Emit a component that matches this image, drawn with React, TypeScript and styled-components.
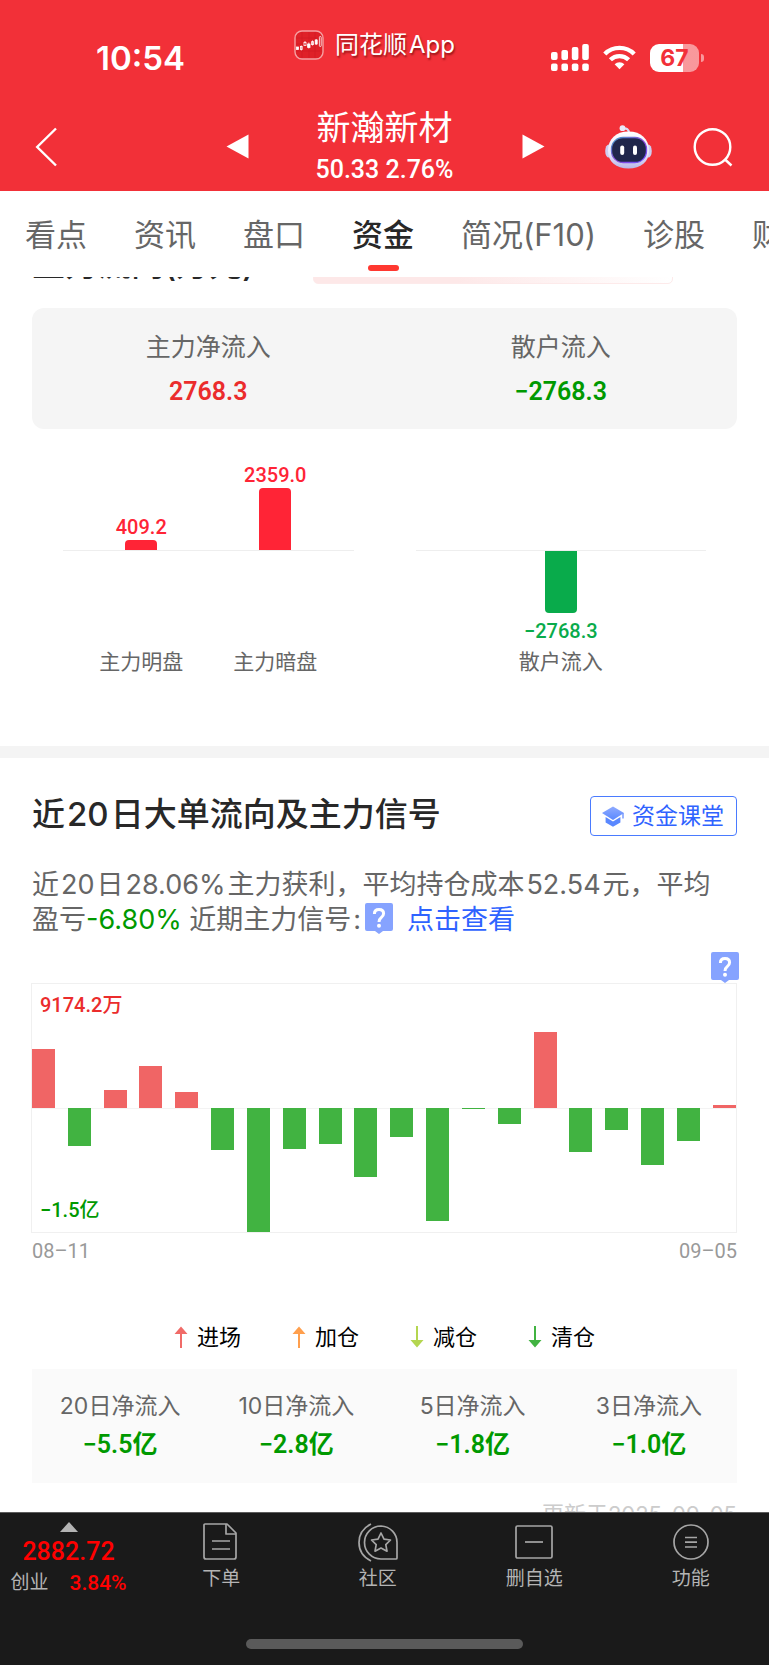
import React, { useLayoutEffect, useRef } from "react";
import styled, { createGlobalStyle } from "styled-components";

const GlobalStyle = createGlobalStyle`
  * { box-sizing: border-box; }
  html, body { margin: 0; padding: 0; background: #fff; }
  body {
    font-family: Inter, "Noto Sans CJK SC", sans-serif;
    color: #323232;
  }
  button { font: inherit; color: inherit; background: none; border: 0; padding: 0; margin: 0; cursor: pointer; }
  h1, h2, p, dl, dd, dt, ul { margin: 0; padding: 0; }
  ul { list-style: none; }
  a { text-decoration: none; }
  svg { display: block; flex: none; }
`;

const RED = "#eb2c2c";
const GREEN = "#009900";
const NUMERIC = `Roboto, "Noto Sans CJK SC", sans-serif`;

const Shell = styled.div`
  display: flex;
  flex-direction: column;
  height: 100vh;
  background: #fff;
`;

/* Latin runs inside Chinese text get a thin space on both sides. */
const Latin = styled.span`
  margin: 0 2px;
`;

/* ---------- header ---------- */

const Header = styled.header`
  flex: none;
  background: #f23038;
  color: #fff;
`;

const StatusBar = styled.div`
  display: grid;
  grid-template-columns: 1fr auto 1fr;
  align-items: center;
  height: 96px;
  padding-top: 19px;
`;

const Clock = styled.time`
  padding-left: 96px;
  font-size: 33px;
  line-height: 40px;
  font-weight: 600;
`;

const AppBadge = styled.div`
  display: flex;
  align-items: center;
  align-self: start;
  gap: 11px;
  margin: 11px 18px 0 0;
  font-size: 24px;
  line-height: 30px;
  text-shadow: 1px 2px 2px rgba(90, 0, 0, 0.6);
`;

const StatusIcons = styled.div`
  display: flex;
  align-items: center;
  justify-content: flex-end;
  gap: 14px;
  padding-right: 65px;
`;

const Battery = styled.div`
  display: flex;
  align-items: center;
  gap: 2px;

  &::after {
    content: "";
    width: 3px;
    height: 8px;
    border-radius: 0 3px 3px 0;
    background: rgba(255, 255, 255, 0.5);
  }
`;

const BatteryLevel = styled.span`
  width: 49px;
  height: 28px;
  border-radius: 9px;
  background: linear-gradient(90deg, #fff 67%, rgba(255, 255, 255, 0.5) 67%);
  color: #f23038;
  font-size: 23px;
  line-height: 28px;
  font-weight: 700;
  text-align: center;
`;

const NavBar = styled.div`
  display: grid;
  grid-template-columns: 1fr auto 1fr;
  column-gap: 67px;
  align-items: center;
  height: 95px;
  padding-top: 6px;
`;

const NavSide = styled.div<{ $end?: boolean }>`
  display: flex;
  align-items: center;
  justify-content: space-between;
  padding: ${(p) => (p.$end ? "0 36px 0 2px" : "0 0 0 35px")};
`;

const NavActions = styled.div`
  display: flex;
  align-items: center;
  gap: 41px;
`;

const StockTitle = styled.div`
  display: flex;
  flex-direction: column;
  align-items: center;
  gap: 9px;
  padding-bottom: 3px;
`;

const StockName = styled.h1`
  font-size: 34px;
  line-height: 40px;
  font-weight: 400;
`;

const StockPrice = styled.p`
  font-family: ${NUMERIC};
  font-size: 25px;
  line-height: 26px;
  font-weight: 500;
`;

/* ---------- tabs ---------- */

const Tabs = styled.nav`
  flex: none;
  display: flex;
  gap: 47px;
  height: 86px;
  padding: 24px 0 0 25px;
  overflow: hidden;
  background: #fff;
`;

const Tab = styled.button<{ $active?: boolean }>`
  flex: none;
  display: flex;
  flex-direction: column;
  align-items: center;
  justify-content: flex-start;
  font-size: 31px;
  line-height: 40px;
  white-space: nowrap;
  color: ${(p) => (p.$active ? "#282828" : "#666")};
  font-weight: ${(p) => (p.$active ? 500 : 400)};

  &::after {
    content: "";
    width: 31px;
    height: 6px;
    margin-top: 10px;
    border-radius: 3px;
    background: ${(p) => (p.$active ? "#ff3830" : "transparent")};
  }
`;

/* ---------- scrolling body ---------- */

const Body = styled.main`
  flex: 1;
  min-height: 0;
  overflow-y: auto;
  scrollbar-width: none;
`;

const Section = styled.section`
  padding: 24px 32px 70px;
`;

const Divider = styled.div`
  height: 12px;
  background: #f4f4f4;
`;

const FlowHead = styled.div`
  display: flex;
  align-items: flex-end;
  gap: 59px;
  height: 45px;
  padding-bottom: 3px;
`;

const Heading = styled.h2`
  font-size: 33px;
  line-height: 36px;
  font-weight: 500;
  color: #282828;
  white-space: nowrap;
`;

const Promo = styled.div`
  align-self: flex-start;
  width: 360px;
  height: 44px;
  border: 1px solid #fdeaea;
  border-radius: 5px;
  background: linear-gradient(90deg, #fde8e8 40%, #fff);
`;

const FlowCard = styled.dl`
  display: grid;
  grid-template-columns: 1fr 1fr;
  margin-top: 23px;
  padding: 24px 0 22px;
  border-radius: 12px;
  background: #f5f5f5;
`;

const Stat = styled.div<{ $gap: number }>`
  display: flex;
  flex-direction: column;
  align-items: center;
  gap: ${(p) => p.$gap}px;
`;

const StatLabel = styled.dt<{ $size: number }>`
  font-size: ${(p) => p.$size}px;
  line-height: 30px;
  color: #666;
`;

const StatValue = styled.dd<{ $up?: boolean }>`
  font-family: ${NUMERIC};
  font-size: 25px;
  line-height: 30px;
  font-weight: 600;
  color: ${(p) => (p.$up ? RED : GREEN)};
`;

const SplitChart = styled.div`
  display: grid;
  grid-template-columns: 1fr 1fr;
`;

const SplitPanel = styled.div`
  position: relative;
  display: flex;
  justify-content: center;
  margin: 0 31px;

  &::before {
    content: "";
    position: absolute;
    top: 121px;
    left: 0;
    right: 0;
    height: 1px;
    background: #eee;
  }
`;

const SplitColumn = styled.div`
  display: flex;
  flex-direction: column;
  width: 134px;
  font-size: 21px;
  line-height: 28px;
  text-align: center;
  color: #666;
`;

const Half = styled.div<{ $down?: boolean }>`
  display: flex;
  flex-direction: column;
  align-items: center;
  justify-content: ${(p) => (p.$down ? "flex-start" : "flex-end")};
  gap: ${(p) => (p.$down ? 6 : 1)}px;
  height: ${(p) => (p.$down ? 97 : 121)}px;
  margin-bottom: ${(p) => (p.$down ? 0 : 1)}px;
  font-family: ${NUMERIC};
  font-size: 20px;
  line-height: 24px;
  font-weight: 500;
  color: ${(p) => (p.$down ? "#09ab4b" : "#ff2436")};
`;

const SplitBar = styled.div<{ $down?: boolean }>`
  width: 32px;
  border-radius: ${(p) => (p.$down ? "0 0 4px 4px" : "4px 4px 0 0")};
  background: currentColor;
`;

const SignalHead = styled.div`
  display: flex;
  align-items: flex-start;
  justify-content: space-between;
  padding-top: 14px;
`;

const LessonLink = styled.a`
  display: flex;
  align-items: center;
  gap: 8px;
  height: 40px;
  padding: 0 12px 0 11px;
  border: 1px solid #4a7bff;
  border-radius: 4px;
  font-size: 23px;
  line-height: 30px;
  color: #2f63ff;
`;

const Summary = styled.p`
  margin-top: 31px;
  padding-right: 20px;
  font-size: 27px;
  line-height: 35px;
  color: #666;
`;

const Loss = styled.span`
  color: ${GREEN};
`;

const ViewLink = styled.a`
  margin-left: 14px;
  color: #2f63ff;
`;

const HelpButton = styled.button`
  margin: 1px 0 0 2px;
  vertical-align: top;
`;

const PinnedHelp = styled.button`
  position: absolute;
  right: -3px;
  top: -32px;
`;

const DailyChart = styled.div`
  position: relative;
  margin: 46px 0 0 -1px;
  border: 1px solid #f0f0f0;
  background: linear-gradient(#f3f3f3, #f3f3f3) center / 100% 1px no-repeat;
`;

const ChartNote = styled.span<{ $up?: boolean }>`
  position: absolute;
  left: 8px;
  ${(p) => (p.$up ? "top: 7px;" : "bottom: 8px;")}
  font-family: ${NUMERIC};
  font-size: 20px;
  line-height: 28px;
  font-weight: 500;
  color: ${(p) => (p.$up ? RED : GREEN)};
`;

const Bars = styled.div`
  display: flex;
  justify-content: space-between;
  height: 248px;
`;

const Bar = styled.div<{ $up: boolean }>`
  align-self: ${(p) => (p.$up ? "flex-start" : "flex-end")};
  display: flex;
  align-items: ${(p) => (p.$up ? "flex-end" : "flex-start")};
  width: 23px;
  height: 50%;

  > i {
    width: 100%;
    background: ${(p) => (p.$up ? "#f06565" : "#41b341")};
  }
`;

const Dates = styled.div`
  display: flex;
  justify-content: space-between;
  margin-top: 6px;
  font-family: ${NUMERIC};
  font-size: 20px;
  line-height: 24px;
  color: #999;
`;

const Legend = styled.ul`
  display: flex;
  justify-content: center;
  gap: 51px;
  margin-top: 59px;
`;

const LegendItem = styled.li`
  display: flex;
  align-items: center;
  gap: 9px;
  font-size: 22px;
  line-height: 30px;
  color: #000;
`;

const NetFlows = styled.dl`
  display: grid;
  grid-template-columns: repeat(4, 1fr);
  margin-top: 17px;
  padding: 22px 0 23px;
  background: #fafafa;
`;

const Updated = styled.p`
  margin-top: 16px;
  font-size: 22px;
  line-height: 30px;
  text-align: right;
  color: #ccc;
`;

/* ---------- footer ---------- */

const Footer = styled.footer`
  flex: none;
  display: flex;
  flex-direction: column;
  justify-content: space-between;
  height: 153px;
  padding-bottom: 16px;
  border-top: 1px solid #5c5c5c;
  background: #1a1a1a;
  color: #b4b4b4;
`;

const Actions = styled.div`
  display: grid;
  grid-template-columns: 143px repeat(4, 1fr);
`;

const IndexQuote = styled.button`
  display: flex;
  flex-direction: column;
  align-items: center;
  padding: 9px 6px 0 0;
`;

const IndexValue = styled.strong`
  margin-top: 7px;
  font-family: ${NUMERIC};
  font-size: 25px;
  line-height: 26px;
  font-weight: 500;
  color: #f00;
`;

const IndexChange = styled.span`
  display: flex;
  align-items: center;
  gap: 21px;
  margin-top: 5px;
  font-size: 19px;
  line-height: 26px;

  > b {
    font-family: ${NUMERIC};
    font-size: 21px;
    font-weight: 500;
    color: #f00;
  }
`;

const Action = styled.button`
  display: flex;
  flex-direction: column;
  align-items: center;
  gap: 4px;
  padding-top: 9px;
  font-size: 19px;
  line-height: 26px;
`;

const HomeIndicator = styled.div`
  align-self: center;
  width: 36%;
  height: 10px;
  border-radius: 5px;
  background: #5a5a5a;
`;

/* ---------- icons ---------- */

const AppIcon = () => (
  <svg width="30" height="30" viewBox="0 0 30 30" aria-hidden="true">
    <rect x="1" y="1" width="28" height="28" rx="7" fill="#df2128" stroke="#f5a0a2" strokeWidth="1.4" />
    <path d="M2 8H28M2 14H28M2 21H28M8 2V28M15 2V28M21 2V28" stroke="#d01a22" strokeWidth="0.6" />
    <g stroke="#fff" strokeWidth="0.8">
      <rect x="2.5" y="17" width="2" height="2.5" fill="#fff" />
      <rect x="6.4" y="16.5" width="1.8" height="3" fill="none" />
      <rect x="10" y="12.5" width="2" height="3" fill="none" />
      <rect x="13.6" y="14" width="2.4" height="3.4" fill="#fff" />
      <rect x="17.6" y="11.6" width="1.8" height="3" fill="none" />
      <rect x="21.2" y="10" width="2" height="4" fill="#fff" />
      <rect x="25.4" y="6.5" width="1.8" height="10" rx="0.8" fill="none" />
      <path d="M7.3 15.5V20.5M11 11V12.5M14.8 12.5V18.5M18.5 10.5V15.5M22.2 9V15" />
    </g>
  </svg>
);

const SignalIcon = () => (
  <svg width="38" height="27" viewBox="0 0 38 27" fill="#fff" aria-hidden="true">
    <rect x="0" y="8" width="6.6" height="8" rx="2" />
    <rect x="10.4" y="6" width="6.6" height="10" rx="2" />
    <rect x="20.8" y="3" width="6.6" height="13" rx="2" />
    <rect x="31.2" y="0" width="6.6" height="16" rx="2" />
    <rect x="0" y="19.5" width="6.6" height="7.5" rx="2" />
    <rect x="10.4" y="19.5" width="6.6" height="7.5" rx="2" />
    <rect x="20.8" y="19.5" width="6.6" height="7.5" rx="2" />
    <rect x="31.2" y="19.5" width="6.6" height="7.5" rx="2" />
  </svg>
);

const WifiIcon = () => (
  <svg width="33" height="25" viewBox="0 0 33 25" fill="none" stroke="#fff" strokeWidth="4.4" aria-hidden="true">
    <path d="M1.8 9A20.8 20.8 0 0 1 31.2 9" />
    <path d="M7.4 14.8A13 13 0 0 1 25.6 14.8" />
    <path d="M11.6 19.2A7 7 0 0 1 21.4 19.2L16.5 24.2Z" fill="#fff" stroke="none" />
  </svg>
);

const BackIcon = () => (
  <svg width="23" height="40" viewBox="0 0 23 40" fill="none" stroke="#fff" strokeWidth="2.4" aria-hidden="true">
    <path d="M21 1.5L2.2 20L21 38.5" />
  </svg>
);

const TriangleIcon = ({ right }: { right?: boolean }) => (
  <svg width="23" height="25" viewBox="0 0 23 25" fill="#fff" aria-hidden="true">
    <path d={right ? "M0.5 0.5V24.5L22.5 12.5Z" : "M22.5 0.5V24.5L0.5 12.5Z"} />
  </svg>
);

const RobotIcon = () => (
  <svg width="47" height="44" viewBox="0 0 47 44" aria-hidden="true">
    <defs>
      <linearGradient id="shell" x1="0" y1="0" x2="0" y2="1">
        <stop offset="0" stopColor="#ffffff" />
        <stop offset="0.6" stopColor="#e8e6fa" />
        <stop offset="1" stopColor="#b9b6e6" />
      </linearGradient>
      <linearGradient id="rim" x1="0" y1="0" x2="1" y2="1">
        <stop offset="0" stopColor="#3f9fc4" />
        <stop offset="0.5" stopColor="#8b4bd8" />
        <stop offset="1" stopColor="#6a4dff" />
      </linearGradient>
    </defs>
    <path d="M17 3.5Q24 2.5 24 8" fill="none" stroke="#dcdcf6" strokeWidth="2.2" />
    <circle cx="17.5" cy="3.2" r="2.9" fill="#e9e9fa" />
    <ellipse cx="3.8" cy="26" rx="3.6" ry="6.6" fill="#cfcdf0" />
    <ellipse cx="43.2" cy="26" rx="3.6" ry="6.6" fill="#cfcdf0" />
    <path d="M23.5 6.5C36 6.5 44 14 44 25.5S36 43.5 23.5 43.5S3 37 3 25.5S11 6.5 23.5 6.5Z" fill="url(#shell)" />
    <rect x="6.5" y="12.5" width="35" height="25" rx="11.5" fill="#20264b" stroke="url(#rim)" strokeWidth="1.3" />
    <rect x="15.2" y="20.5" width="4" height="9.5" rx="2" fill="#fff" />
    <rect x="28" y="20.5" width="4" height="9.5" rx="2" fill="#fff" />
  </svg>
);

const SearchIcon = () => (
  <svg width="40" height="40" viewBox="0 0 40 40" fill="none" stroke="#fff" strokeWidth="2.4" aria-hidden="true">
    <circle cx="19.5" cy="20" r="17.8" />
    <path d="M31.5 32L38.5 38.5" />
  </svg>
);

const HelpIcon = () => (
  <svg width="28" height="31" viewBox="0 0 28 31" aria-hidden="true">
    <path d="M2 0H26Q28 0 28 2V26Q28 28 26 28H18L14 31L10 28H2Q0 28 0 26V2Q0 0 2 0Z" fill="#86a3ff" />
    <path d="M9.4 11Q9.4 6.6 14 6.6Q18.6 6.6 18.6 10.6Q18.6 12.8 16.2 14.6Q14 16.2 14 19" fill="none" stroke="#fff" strokeWidth="3" />
    <circle cx="14" cy="22.8" r="2" fill="#fff" />
  </svg>
);

const CapIcon = () => (
  <svg width="22" height="21" viewBox="0 0 22 21" aria-hidden="true">
    <defs>
      <linearGradient id="cap" x1="0" y1="0" x2="0" y2="1">
        <stop offset="0" stopColor="#8fabff" />
        <stop offset="1" stopColor="#5a88ff" />
      </linearGradient>
    </defs>
    <path d="M11 0.5L22 7L11 14L0 7Z" fill="url(#cap)" />
    <path d="M3.6 11L11 15.6L18.4 11V16.4L11 20.8L3.6 16.4Z" fill="#5a88ff" />
    <path d="M21 7V12.5" stroke="#6f94ff" strokeWidth="1.4" />
  </svg>
);

const ArrowIcon = ({ color, down }: { color: string; down?: boolean }) => (
  <svg width="14" height="22" viewBox="0 0 14 22" fill={color} aria-hidden="true">
    {down ? <path d="M6 0H8V14H13.5L7 21.5L0.5 14H6Z" /> : <path d="M7 0.5L13.5 8H8V22H6V8H0.5Z" />}
  </svg>
);

const CaretIcon = () => (
  <svg width="18" height="10" viewBox="0 0 18 10" fill="#b4b4b4" aria-hidden="true">
    <path d="M9 0L18 10H0Z" />
  </svg>
);

const LineIcon = ({ children }: { children: React.ReactNode }) => (
  <svg width="40" height="40" viewBox="0 0 40 40" fill="none" stroke="#a6a6a6" strokeWidth="1.7" strokeLinejoin="round" aria-hidden="true">
    {children}
  </svg>
);

/* ---------- data ---------- */

const tabs = ["看点", "资讯", "盘口", "资金", "简况(F10)", "诊股", "财务"];
const daily = [59, -38, 18, 42, 16, -42, -124, -41, -36, -69, -29, -113, -1, -16, 76, -44, -22, -57, -33, 3];
const netFlows = [
  ["20日净流入", "−5.5亿"],
  ["10日净流入", "−2.8亿"],
  ["5日净流入", "−1.8亿"],
  ["3日净流入", "−1.0亿"],
];
const legend = [
  { name: "进场", color: "#f06b68" },
  { name: "加仓", color: "#ff9f4d" },
  { name: "减仓", color: "#b4d650", down: true },
  { name: "清仓", color: "#41b341", down: true },
];
const actions = [
  {
    name: "下单",
    icon: (
      <>
        <path d="M4 2H26L35 11V35Q35 37 33 37H5Q3 37 3 35V3Q3 2 4 2Z" />
        <path d="M25 2V12H35M11 19H29M11 27H29" />
      </>
    ),
  },
  {
    name: "社区",
    icon: (
      <>
        <path d="M23 4A16.5 16.5 0 1 0 23 37H38Q39 37 39 36V21A16.5 16.5 0 0 0 23 4Z" />
        <path d="M13 2Q1 8 1 20.5T13 39" />
        <path d="M23 11L26 17.2L32.5 18L27.8 22.6L29 29.2L23 26L17 29.2L18.2 22.6L13.5 18L20 17.2Z" />
      </>
    ),
  },
  {
    name: "删自选",
    icon: (
      <>
        <rect x="2" y="4" width="36" height="32" rx="1.5" />
        <path d="M11 20H29" />
      </>
    ),
  },
  {
    name: "功能",
    icon: (
      <>
        <circle cx="20" cy="20" r="17" />
        <path d="M14 15.5H26M14 20.2H26M14 25H26" />
      </>
    ),
  },
];

export default function App() {
  const body = useRef<HTMLElement>(null);

  useLayoutEffect(() => {
    if (body.current) body.current.scrollTop = 61;
  }, []);

  return (
    <Shell>
      <GlobalStyle />
      <Header>
        <StatusBar>
          <Clock>10:54</Clock>
          <AppBadge>
            <AppIcon />
            <span>同花顺<Latin>App</Latin></span>
          </AppBadge>
          <StatusIcons>
            <SignalIcon />
            <WifiIcon />
            <Battery>
              <BatteryLevel>67</BatteryLevel>
            </Battery>
          </StatusIcons>
        </StatusBar>
        <NavBar>
          <NavSide>
            <button aria-label="返回"><BackIcon /></button>
            <button aria-label="上一只"><TriangleIcon /></button>
          </NavSide>
          <StockTitle>
            <StockName>新瀚新材</StockName>
            <StockPrice>50.33 2.76%</StockPrice>
          </StockTitle>
          <NavSide $end>
            <button aria-label="下一只"><TriangleIcon right /></button>
            <NavActions>
              <button aria-label="助手"><RobotIcon /></button>
              <button aria-label="搜索"><SearchIcon /></button>
            </NavActions>
          </NavSide>
        </NavBar>
      </Header>

      <Tabs>
        {tabs.map((name) => (
          <Tab key={name} $active={name === "资金"}>{name}</Tab>
        ))}
      </Tabs>

      <Body ref={body}>
        <Section>
          <FlowHead>
            <Heading>主力流向(万元)</Heading>
            <Promo />
          </FlowHead>
          <FlowCard>
            <Stat $gap={15}>
              <StatLabel $size={25}>主力净流入</StatLabel>
              <StatValue $up>2768.3</StatValue>
            </Stat>
            <Stat $gap={15}>
              <StatLabel $size={25}>散户流入</StatLabel>
              <StatValue>−2768.3</StatValue>
            </Stat>
          </FlowCard>
          <SplitChart>
            <SplitPanel>
              <SplitColumn>
                <Half>
                  409.2
                  <SplitBar style={{ height: 10 }} />
                </Half>
                <Half $down />
                主力明盘
              </SplitColumn>
              <SplitColumn>
                <Half>
                  2359.0
                  <SplitBar style={{ height: 62 }} />
                </Half>
                <Half $down />
                主力暗盘
              </SplitColumn>
            </SplitPanel>
            <SplitPanel>
              <SplitColumn>
                <Half />
                <Half $down>
                  <SplitBar $down style={{ height: 62 }} />
                  −2768.3
                </Half>
                散户流入
              </SplitColumn>
            </SplitPanel>
          </SplitChart>
        </Section>

        <Divider />

        <Section>
          <SignalHead>
            <Heading>近<Latin>20</Latin>日大单流向及主力信号</Heading>
            <LessonLink href="#lesson">
              <CapIcon />
              资金课堂
            </LessonLink>
          </SignalHead>
          <Summary>
            近<Latin>20</Latin>日<Latin>28.06%</Latin>主力获利，平均持仓成本<Latin>52.54</Latin>元，平均盈亏
            <Loss>-6.80%</Loss> 近期主力信号<Latin>:</Latin>
            <HelpButton aria-label="信号说明"><HelpIcon /></HelpButton>
            <ViewLink href="#signals">点击查看</ViewLink>
          </Summary>
          <DailyChart>
            <Bars>
              {daily.map((value, i) => (
                <Bar key={i} $up={value > 0}>
                  <i style={{ height: `${(Math.abs(value) / 124) * 100}%` }} />
                </Bar>
              ))}
            </Bars>
            <ChartNote $up>9174.2万</ChartNote>
            <ChartNote>−1.5亿</ChartNote>
            <PinnedHelp aria-label="图表说明"><HelpIcon /></PinnedHelp>
          </DailyChart>
          <Dates>
            <span>08–11</span>
            <span>09–05</span>
          </Dates>
          <Legend>
            {legend.map((item) => (
              <LegendItem key={item.name}>
                <ArrowIcon color={item.color} down={item.down} />
                {item.name}
              </LegendItem>
            ))}
          </Legend>
          <NetFlows>
            {netFlows.map(([label, value]) => (
              <Stat key={label} $gap={9}>
                <StatLabel $size={23}>{label}</StatLabel>
                <StatValue>{value}</StatValue>
              </Stat>
            ))}
          </NetFlows>
          <Updated>更新于2025-09-05</Updated>
        </Section>
      </Body>

      <Footer>
        <Actions>
          <IndexQuote>
            <CaretIcon />
            <IndexValue>2882.72</IndexValue>
            <IndexChange>创业 <b>3.84%</b></IndexChange>
          </IndexQuote>
          {actions.map((action) => (
            <Action key={action.name}>
              <LineIcon>{action.icon}</LineIcon>
              {action.name}
            </Action>
          ))}
        </Actions>
        <HomeIndicator />
      </Footer>
    </Shell>
  );
}
